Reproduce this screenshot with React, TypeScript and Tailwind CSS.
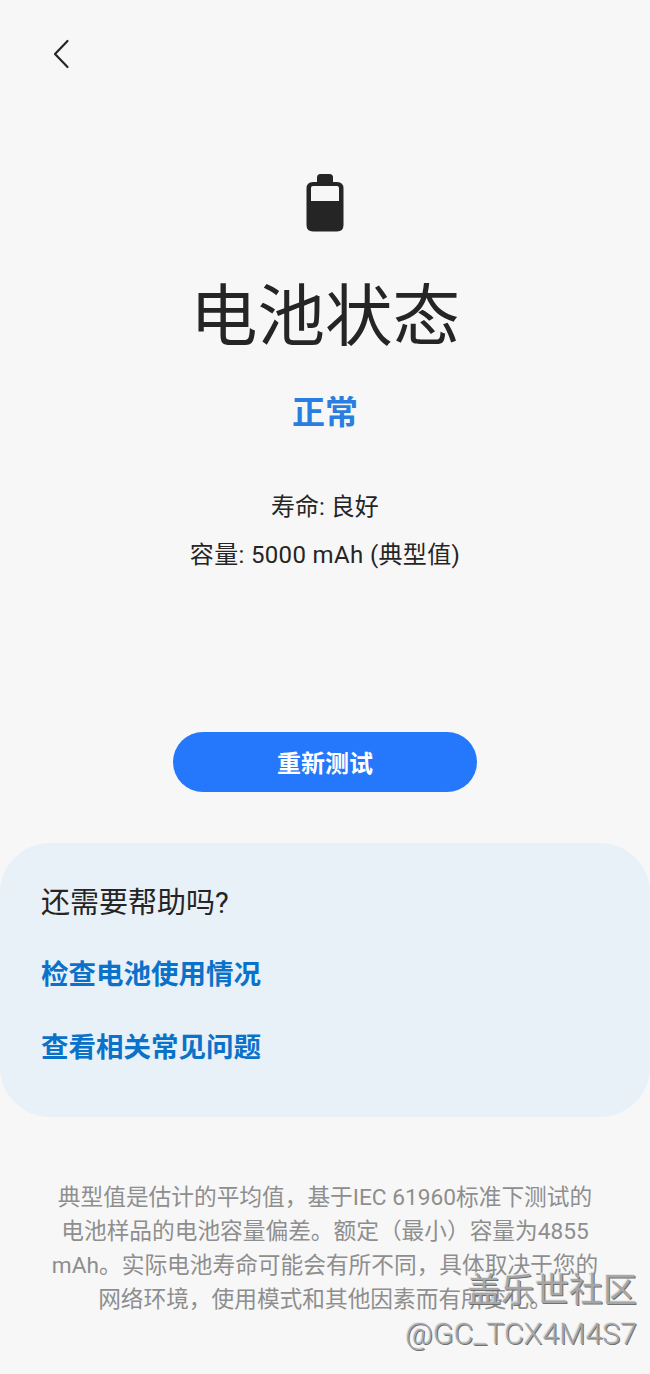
const fontStack = 'font-[Roboto,"Noto_Sans_CJK_SC",sans-serif]';

function BackIcon() {
  return (
    <svg width="22" height="32" viewBox="0 0 22 32" fill="none" className="block">
      <path d="M17.5 3 L5 16 L17.5 29" stroke="#252525" strokeWidth="2.2" strokeLinecap="round" strokeLinejoin="round" />
    </svg>
  );
}

function BatteryIcon() {
  return (
    <svg width="40" height="58" viewBox="0 0 40 58" className="block">
      <path d="M12 3.5 Q12 0 15.5 0 H24.5 Q28 0 28 3.5 V9 H12 Z" fill="#252525" />
      <path
        fillRule="evenodd"
        d="M8 8 H32 Q38.5 8 38.5 14.5 V51 Q38.5 57.5 32 57.5 H8 Q1.5 57.5 1.5 51 V14.5 Q1.5 8 8 8 Z M8 12 Q6 12 6 14 V27 H34 V14 Q34 12 32 12 Z"
        fill="#252525"
      />
    </svg>
  );
}

export default function App() {
  return (
    <div className={`relative w-[650px] h-[1374px] overflow-hidden bg-[#f7f7f7] ${fontStack}`}>
      {/* Back button */}
      <div className="h-[174px] pl-[50px] pt-[38px]">
        <BackIcon />
      </div>

      {/* Status */}
      <div className="flex flex-col items-center">
        <BatteryIcon />
        <h1 className="mt-[41px] text-[67.5px] leading-[88px] font-normal text-[#252525]">电池状态</h1>
        <p className="mt-[30px] text-[33px] leading-[44px] font-bold text-[#2a7de1]">正常</p>
        <p className="mt-[56px] text-[24px] leading-[32px] text-[#252525]">寿命: 良好</p>
        <p className="mt-[16px] text-[24px] leading-[32px] tracking-[0.35px] text-[#252525]">容量: 5000 mAh (典型值)</p>
        <button className="mt-[161px] w-[304px] h-[60px] pt-[3px] rounded-full bg-[#2578fb] text-white text-[24px] font-bold">
          重新测试
        </button>
      </div>

      {/* Help panel */}
      <div className="mt-[51px] h-[274px] rounded-[50px] bg-[#e8f0f8] pl-[41px] pt-[40px]">
        <p className="text-[29px] leading-[40px] text-[#252525]">还需要帮助吗?</p>
        <p className="mt-[32px] text-[27.5px] leading-[40px] font-bold text-[#0b72c9]">检查电池使用情况</p>
        <p className="mt-[33px] text-[27.5px] leading-[40px] font-bold text-[#0b72c9]">查看相关常见问题</p>
      </div>

      {/* Footnote */}
      <p className="mt-[64px] mx-auto w-[552px] text-center text-[22.7px] leading-[34px] text-[#8e8e8e]">
        典型值是估计的平均值，基于IEC 61960标准下测试的电池样品的电池容量偏差。额定（最小）容量为4855 mAh。实际电池寿命可能会有所不同，具体取决于您的网络环境，使用模式和其他因素而有所变化。
      </p>

      {/* Watermark */}
      <div className="absolute right-[13px] bottom-[20px] flex flex-col items-end text-[#a6a6a6] [text-shadow:1px_1px_0_#707070,-1px_-1px_0_#e6e6e6]">
        <span className="text-[34px] leading-[44px] mb-[2px]">盖乐世社区</span>
        <span className="text-[30.3px] leading-[40px] font-light">@GC_TCX4M4S7</span>
      </div>
    </div>
  );
}
